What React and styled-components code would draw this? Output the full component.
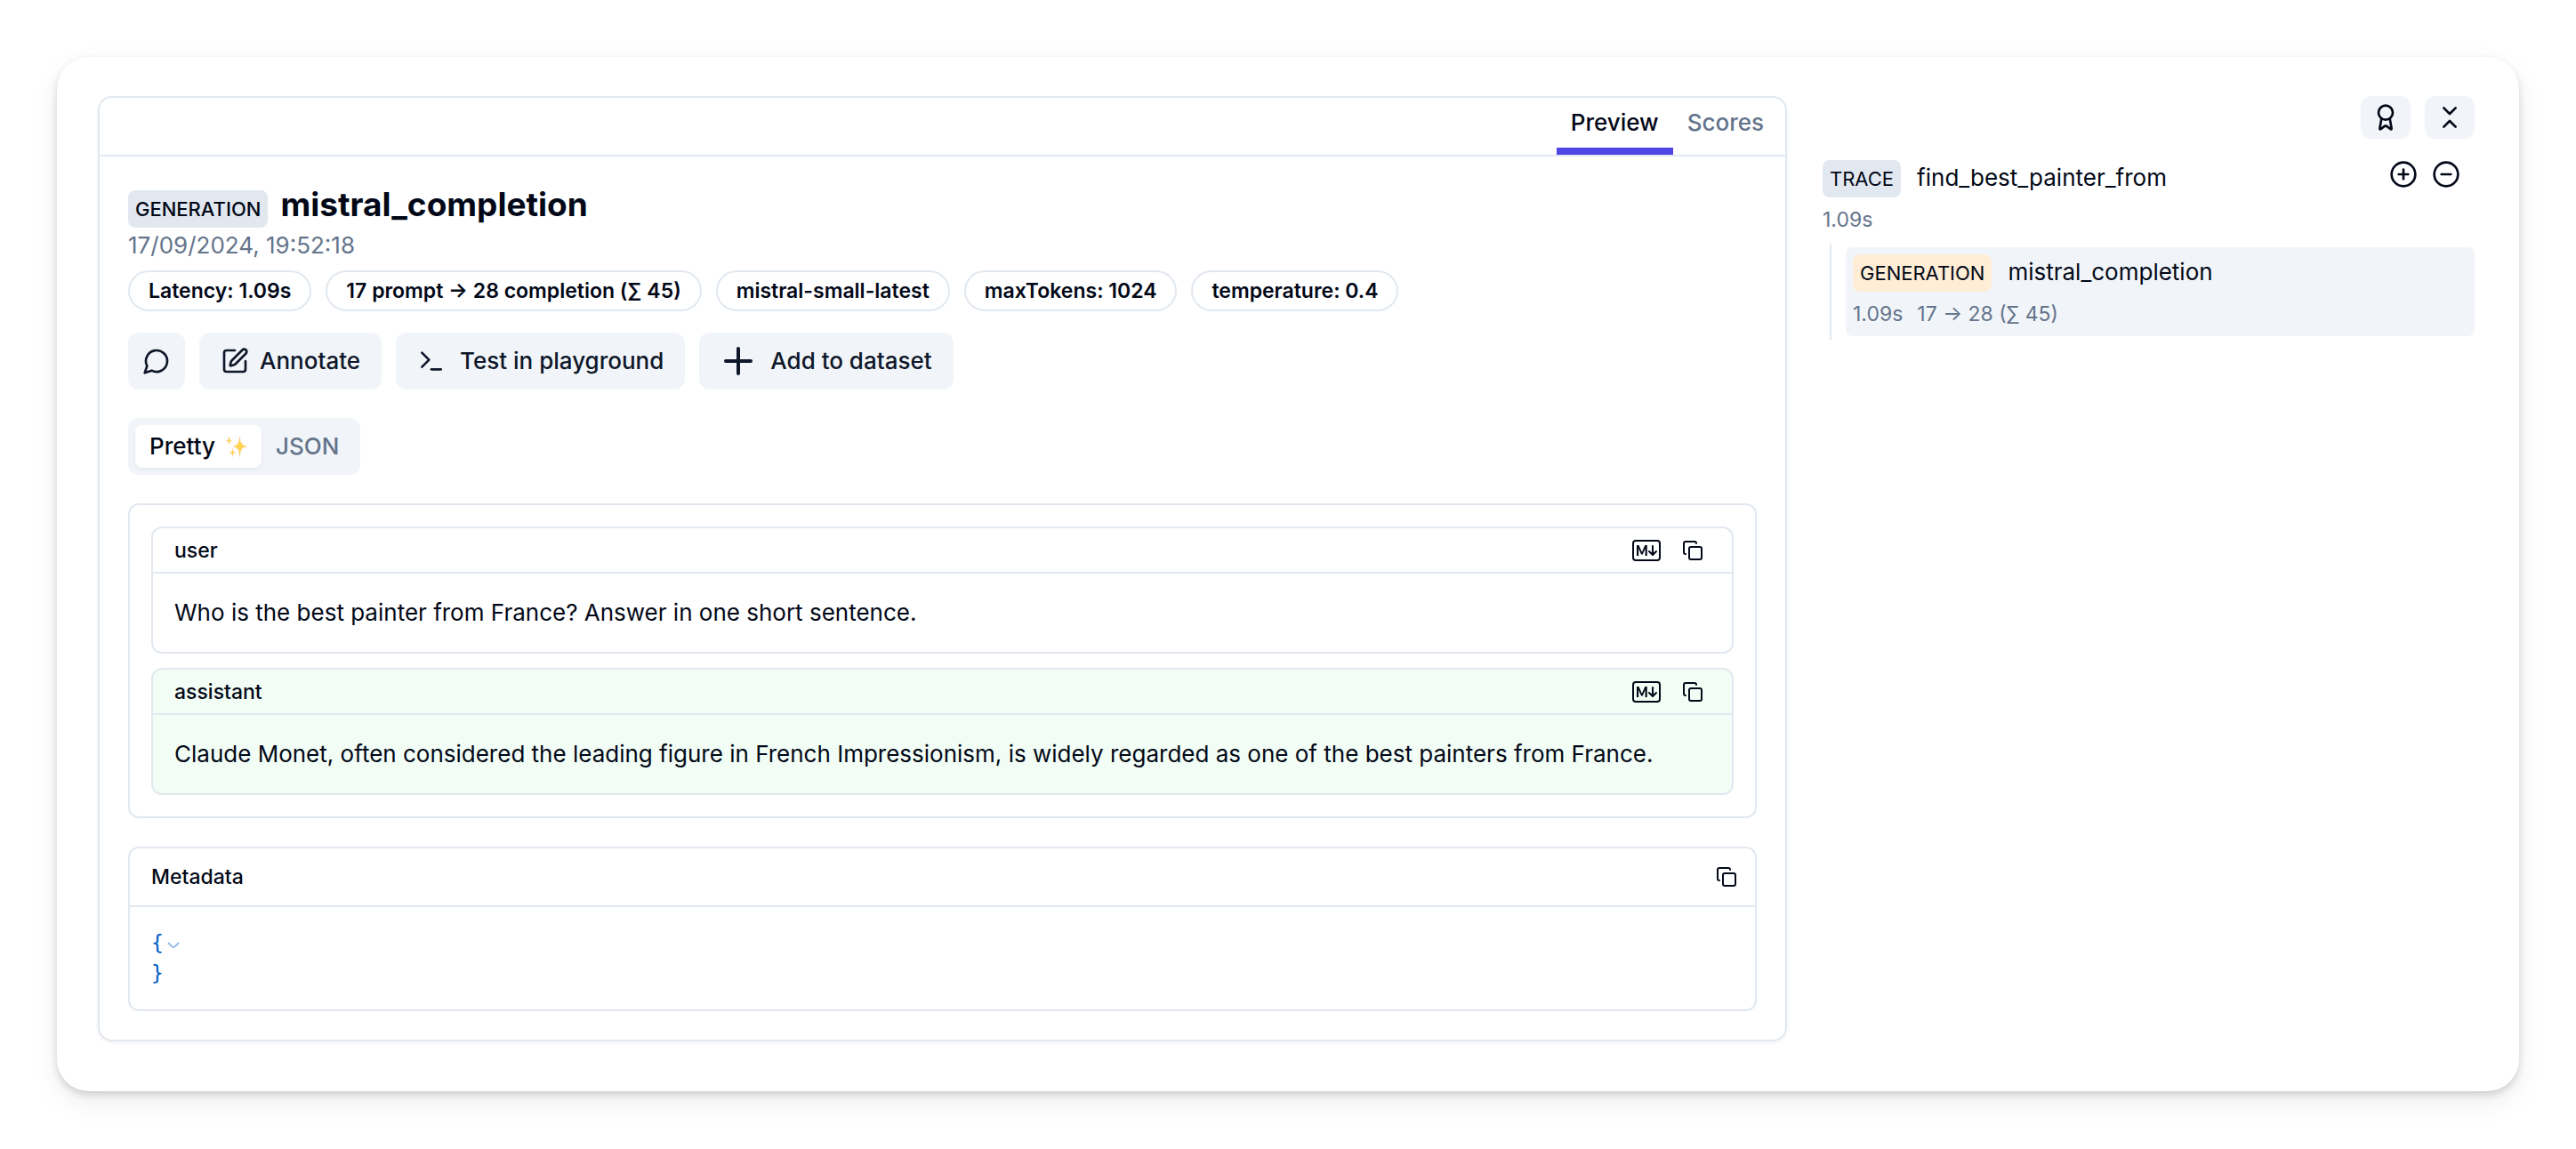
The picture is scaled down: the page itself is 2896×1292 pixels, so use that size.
import React from 'react';
import styled, { createGlobalStyle } from 'styled-components';
import {
  Award,
  ChevronsDownUp,
  CirclePlus,
  CircleMinus,
  Copy,
  SquarePen,
  Terminal,
} from 'lucide-react';
import { BsMarkdown } from 'react-icons/bs';

const colors = {
  ink: '#020817',
  button: '#0f172a',
  muted: '#64748b',
  border: '#e2e8f0',
  soft: '#f1f5f9',
  accent: '#4f46e5',
  green: '#f2fdf5',
  orange: '#ffedd5',
  json: '#005cc5',
};

const GlobalStyle = createGlobalStyle`
  * {
    box-sizing: border-box;
  }
  body {
    margin: 0;
    background: #fff;
    color: ${colors.ink};
    font-family: Inter, "Liberation Sans", sans-serif;
    font-size: 26px;
    line-height: 40px;
  }
  h1, p {
    margin: 0;
  }
  button {
    border: 0;
    padding: 0;
    background: none;
    color: inherit;
    font: inherit;
    cursor: pointer;
  }
  svg {
    display: block;
    flex-shrink: 0;
  }
`;

const Page = styled.div`
  padding: 64px;
`;

const Window = styled.div`
  display: grid;
  grid-template-columns: minmax(0, 1fr) 733px;
  gap: 40px;
  align-items: start;
  padding: 44px 50px 56px 46px;
  border-radius: 36px;
  background: #fff;
  box-shadow: 0 4px 8px rgba(0, 0, 0, 0.15), 0 12px 32px rgba(0, 0, 0, 0.07);
`;

const Panel = styled.main`
  border: 2px solid ${colors.border};
  border-radius: 16px;
  box-shadow: 0 2px 4px rgba(0, 0, 0, 0.05);
`;

const PanelTabs = styled.nav`
  display: flex;
  justify-content: flex-end;
  height: 66px;
  padding-right: 8px;
  border-bottom: 2px solid ${colors.border};
`;

const PanelTab = styled.button`
  padding: 0 16px;
  border-bottom: 8px solid ${props => props.$active ? colors.accent : 'transparent'};
  color: ${props => props.$active ? colors.ink : colors.muted};
  font-weight: 500;
`;

const PanelBody = styled.div`
  display: flex;
  flex-direction: column;
  gap: 32px;
  padding: 32px;
`;

const Summary = styled.header`
  display: flex;
  flex-direction: column;
`;

const TitleRow = styled.div`
  display: flex;
  align-items: baseline;
  gap: 14px;
`;

const Title = styled.h1`
  font-size: 37px;
  font-weight: 700;
  line-height: 44px;
`;

const TypeBadge = styled.span`
  padding: 4px 8px;
  border-radius: 8px;
  background: ${props => props.$tone || colors.border};
  font-size: 22px;
  font-weight: ${props => props.$strong ? 500 : 400};
  line-height: 34px;
`;

const Muted = styled.p`
  color: ${colors.muted};
`;

const Pills = styled.div`
  display: flex;
  flex-wrap: wrap;
  gap: 16px;
  margin-top: 8px;
`;

const Pill = styled.span`
  padding: 4px 21px;
  border: 2px solid ${colors.border};
  border-radius: 24px;
  font-size: 23px;
  font-weight: 600;
  line-height: 34px;
`;

const Actions = styled.div`
  display: flex;
  flex-wrap: wrap;
  gap: 16px;
  margin-top: 24px;
`;

const ActionButton = styled.button`
  display: flex;
  align-items: center;
  gap: ${props => props.$tight ? '12px' : '16px'};
  height: 64px;
  padding: 0 ${props => props.$iconOnly ? '16px' : '24px'};
  border-radius: 12px;
  background: ${colors.soft};
  color: ${colors.button};
  font-weight: 500;
`;

const ViewSwitch = styled.div`
  display: flex;
  align-self: flex-start;
  padding: 8px;
  border-radius: 12px;
  background: ${colors.soft};
`;

const ViewOption = styled.button`
  display: flex;
  align-items: center;
  gap: 12px;
  height: 48px;
  padding: 0 16px;
  border-radius: 8px;
  background: ${props => props.$active ? '#fff' : 'transparent'};
  box-shadow: ${props => props.$active ? '0 2px 4px rgba(0, 0, 0, 0.06)' : 'none'};
  color: ${props => props.$active ? colors.ink : colors.muted};
  font-weight: 500;
`;

const Messages = styled.section`
  display: flex;
  flex-direction: column;
  gap: 16px;
  padding: 24px;
  border: 2px solid ${colors.border};
  border-radius: 12px;
`;

const Card = styled.article`
  border: 2px solid ${colors.border};
  border-radius: 12px;
  background: ${props => props.$tone || 'transparent'};
`;

const CardHeader = styled.div`
  display: flex;
  align-items: center;
  justify-content: space-between;
  height: ${props => props.$tall ? '66px' : '51px'};
  padding: ${props => props.$tall ? '0 20px 0 24px' : '0 32px 0 24px'};
  border-bottom: 2px solid ${colors.border};
  font-size: 23px;
  font-weight: 500;
`;

const IconRow = styled.div`
  display: flex;
  align-items: center;
  gap: ${props => props.$close ? '16px' : '24px'};
`;

const CardText = styled.p`
  padding: 24px;
`;

const JsonBody = styled.div`
  padding: 23px 24px 24px;
  color: ${colors.json};
  font-family: "DejaVu Sans Mono", monospace;
  font-size: 23px;
  line-height: 34px;
`;

const JsonLine = styled.div`
  display: flex;
  align-items: center;
`;

const FoldButton = styled.button`
  padding: 6px 0 0 4px;
`;

const Sidebar = styled.aside`
  display: flex;
  flex-direction: column;
`;

const SidebarTools = styled.div`
  display: flex;
  justify-content: flex-end;
  gap: 16px;
  margin-bottom: 24px;
`;

const SidebarButton = styled.button`
  display: flex;
  align-items: center;
  justify-content: center;
  width: 56px;
  height: 48px;
  border-radius: 12px;
  background: ${colors.soft};
`;

const TraceRow = styled.div`
  display: flex;
  align-items: flex-start;
  justify-content: space-between;
  padding-right: 16px;
`;

const NodeTitle = styled.div`
  display: flex;
  align-items: baseline;
  gap: 18px;
`;

const NodeStats = styled.div`
  display: flex;
  gap: 16px;
  margin-top: 8px;
  color: ${colors.muted};
  font-size: 23px;
  line-height: 34px;
`;

const Tree = styled.div`
  margin: 10px 0 0 8px;
  padding: 4px 0 4px 16px;
  border-left: 2px solid ${colors.border};
`;

const TreeNode = styled.div`
  padding: 8px;
  border-radius: 8px;
  background: ${colors.soft};
`;

const CommentIcon = () => (
  <svg width="32" height="32" viewBox="0 0 24 24" fill="none" stroke="currentColor" strokeWidth="2" strokeLinecap="round" strokeLinejoin="round">
    <path d="M7.9 20A9 9 0 1 0 4 16.1L2 22Z" />
  </svg>
);

const PlusIcon = () => (
  <svg width="40" height="40" viewBox="0 0 40 40" fill="none" stroke="currentColor" strokeWidth="4" strokeLinecap="round">
    <path d="M20 6v28M6 20h28" />
  </svg>
);

const Sparkles = () => (
  <svg width="24" height="24" viewBox="0 0 24 24" fill="#ffd54f" stroke="#fbc98a" strokeWidth="0.5">
    <path d="M15.5 1C16.2 8.5 17.5 10.8 23.5 12C17.5 13.2 16.2 15.5 15.5 23C14.8 15.5 13.5 13.2 8 12C13.5 10.8 14.8 8.5 15.5 1Z" />
    <path d="M3.5 1C3.9 4.2 4.3 5 6.8 5.5C4.3 6 3.9 6.8 3.5 10C3.1 6.8 2.7 6 .3 5.5C2.7 5 3.1 4.2 3.5 1Z" />
    <path d="M7.5 14.5C7.9 17.7 8.3 18.5 10.7 19C8.3 19.5 7.9 20.3 7.5 23.5C7.1 20.3 6.7 19.5 4.2 19C6.7 18.5 7.1 17.7 7.5 14.5Z" />
  </svg>
);

const FoldArrow = () => (
  <svg width="14" height="8" viewBox="0 0 14 8" fill="none" stroke="#99bee8" strokeWidth="2">
    <path d="M1 1l4.5 4.5q1.5 1 3 0L13 1" />
  </svg>
);

const details = [
  'Latency: 1.09s',
  '17 prompt → 28 completion (∑ 45)',
  'mistral-small-latest',
  'maxTokens: 1024',
  'temperature: 0.4',
];

const messages = [
  {
    role: 'user',
    text: 'Who is the best painter from France? Answer in one short sentence.',
  },
  {
    role: 'assistant',
    tone: colors.green,
    text: 'Claude Monet, often considered the leading figure in French Impressionism, is widely regarded as one of the best painters from France.',
  },
];

const Message = ({ role, text, tone }) => (
  <Card $tone={tone}>
    <CardHeader>
      <span>{role}</span>
      <IconRow>
        <button aria-label="Toggle markdown"><BsMarkdown size={32} /></button>
        <button aria-label="Copy message"><Copy size={24} /></button>
      </IconRow>
    </CardHeader>
    <CardText>{text}</CardText>
  </Card>
);

const App = () => (
  <Page>
    <GlobalStyle />
    <Window>
      <Panel>
        <PanelTabs>
          <PanelTab $active>Preview</PanelTab>
          <PanelTab>Scores</PanelTab>
        </PanelTabs>
        <PanelBody>
          <Summary>
            <TitleRow>
              <TypeBadge $strong>GENERATION</TypeBadge>
              <Title>mistral_completion</Title>
            </TitleRow>
            <Muted>17/09/2024, 19:52:18</Muted>
            <Pills>
              {details.map(detail => <Pill key={detail}>{detail}</Pill>)}
            </Pills>
            <Actions>
              <ActionButton $iconOnly aria-label="Comment"><CommentIcon /></ActionButton>
              <ActionButton $tight><SquarePen size={32} />Annotate</ActionButton>
              <ActionButton><Terminal size={32} />Test in playground</ActionButton>
              <ActionButton><PlusIcon />Add to dataset</ActionButton>
            </Actions>
          </Summary>
          <ViewSwitch>
            <ViewOption $active>Pretty <Sparkles /></ViewOption>
            <ViewOption>JSON</ViewOption>
          </ViewSwitch>
          <Messages>
            {messages.map(message => <Message key={message.role} {...message} />)}
          </Messages>
          <Card>
            <CardHeader $tall>
              <span>Metadata</span>
              <button aria-label="Copy metadata"><Copy size={24} /></button>
            </CardHeader>
            <JsonBody>
              <JsonLine>
                {'{'}
                <FoldButton aria-label="Collapse"><FoldArrow /></FoldButton>
              </JsonLine>
              <JsonLine>{'}'}</JsonLine>
            </JsonBody>
          </Card>
        </PanelBody>
      </Panel>
      <Sidebar>
        <SidebarTools>
          <SidebarButton aria-label="Scores"><Award size={32} /></SidebarButton>
          <SidebarButton aria-label="Collapse tree"><ChevronsDownUp size={32} /></SidebarButton>
        </SidebarTools>
        <TraceRow>
          <NodeTitle>
            <TypeBadge>TRACE</TypeBadge>
            <span>find_best_painter_from</span>
          </NodeTitle>
          <IconRow $close>
            <button aria-label="Expand all"><CirclePlus size={32} /></button>
            <button aria-label="Collapse all"><CircleMinus size={32} /></button>
          </IconRow>
        </TraceRow>
        <NodeStats>
          <span>1.09s</span>
        </NodeStats>
        <Tree>
          <TreeNode>
            <NodeTitle>
              <TypeBadge $tone={colors.orange}>GENERATION</TypeBadge>
              <span>mistral_completion</span>
            </NodeTitle>
            <NodeStats>
              <span>1.09s</span>
              <span>17 → 28 (∑ 45)</span>
            </NodeStats>
          </TreeNode>
        </Tree>
      </Sidebar>
    </Window>
  </Page>
);

export default App;
